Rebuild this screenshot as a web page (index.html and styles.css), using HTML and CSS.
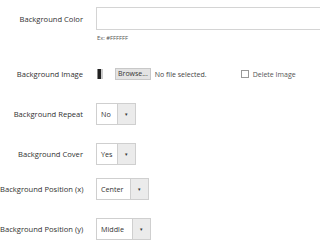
FILE: index.html
```html
<!DOCTYPE html>
<html>
<head>
<meta charset="utf-8">
<link rel="stylesheet" href="styles.css">
</head>
<body>
<div class="form">
  <div class="row row-color">
    <div class="label">Background Color</div>
    <div class="control">
      <div class="text-input"></div>
      <div class="note">Ex: #FFFFFF</div>
    </div>
  </div>
  <div class="row row-image">
    <div class="label">Background Image</div>
    <div class="control file-line">
      <span class="thumb"></span>
      <span class="browse">Browse...</span>
      <span class="nofile">No file selected.</span>
      <span class="delete"><span class="checkbox"></span>Delete Image</span>
    </div>
  </div>
  <div class="row row-repeat">
    <div class="label">Background Repeat</div>
    <div class="control">
      <div class="select w40"><span class="val">No</span><span class="arrow">&#9662;</span></div>
    </div>
  </div>
  <div class="row row-cover">
    <div class="label">Background Cover</div>
    <div class="control">
      <div class="select w40"><span class="val">Yes</span><span class="arrow">&#9662;</span></div>
    </div>
  </div>
  <div class="row row-px">
    <div class="label">Background Position (x)</div>
    <div class="control">
      <div class="select w52"><span class="val">Center</span><span class="arrow">&#9662;</span></div>
    </div>
  </div>
  <div class="row row-py">
    <div class="label">Background Position (y)</div>
    <div class="control">
      <div class="select w54"><span class="val">Middle</span><span class="arrow">&#9662;</span></div>
    </div>
  </div>
</div>
</body>
</html>
```

FILE: styles.css
```css
html, body {
  margin: 0;
  padding: 0;
  background: #ffffff;
}
body {
  font-family: "Open Sans", "Noto Sans", sans-serif;
  color: #333333;
  width: 320px;
  height: 250px;
  overflow: hidden;
}
.form {
  padding-top: 7px;
}
.row {
  display: grid;
  grid-template-columns: 83px 1fr;
  column-gap: 13px;
  align-items: center;
}
.label {
  font-size: 7.6px;
  text-align: right;
  white-space: nowrap;
  color: #303030;
}
.row-color {
  align-items: start;
}
.row-color .label {
  padding-top: 7px;
}
.text-input {
  height: 21px;
  border: 1px solid #d4d4d4;
  border-right: none;
  background: #fff;
}
.note {
  font-size: 5.8px;
  color: #555;
  margin-top: 4px;
  margin-left: 1px;
}
.row-image {
  margin-top: 26px;
}
.file-line {
  display: flex;
  align-items: center;
  height: 12px;
  font-size: 7px;
}
.thumb {
  width: 3px;
  height: 10px;
  background: #222;
  border-left: 1px solid #888;
  border-right: 2px solid #ccc;
  margin-left: 1px;
}
.browse {
  margin-left: 12px;
  background: #e3e3e3;
  border: 1px solid #c8c8c8;
  padding: 1px 2px;
  line-height: 8px;
  color: #333;
}
.nofile {
  margin-left: 4px;
  color: #444;
}
.delete {
  margin-left: 34px;
  display: flex;
  align-items: center;
  color: #555;
}
.checkbox {
  width: 6px;
  height: 6px;
  border: 1px solid #999;
  margin-right: 4px;
  background: #fff;
}
.row-repeat { margin-top: 23px; }
.row-cover { margin-top: 18px; }
.row-px { margin-top: 13px; }
.row-py { margin-top: 18px; }
.select {
  display: flex;
  height: 20px;
  border: 1px solid #cfcfcf;
  background: #fff;
  box-sizing: content-box;
}
.w40 { width: 38px; }
.w52 { width: 51px; }
.w54 { width: 53px; }
.val {
  flex: 1;
  font-size: 7.2px;
  line-height: 20px;
  padding-left: 4px;
  color: #333;
}
.arrow {
  width: 17px;
  background: #ebebeb;
  border-left: 1px solid #cfcfcf;
  font-size: 5px;
  color: #333;
  display: flex;
  align-items: center;
  justify-content: center;
}
```
